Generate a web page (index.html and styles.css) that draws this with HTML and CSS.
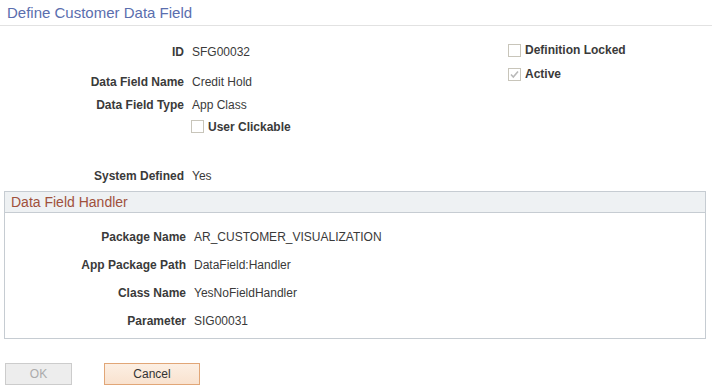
FILE: index.html
```html
<!DOCTYPE html>
<html lang="en">
<head>
  <meta charset="UTF-8" />
  <title>Define Customer Data Field</title>
  <link rel="stylesheet" href="styles.css">
</head>
<body>

<header class="page-title">Define Customer Data Field</header>

<div class="top">
  <div class="fields">
    <div class="row row-id">
      <span class="label">ID</span>
      <span class="value">SFG00032</span>
    </div>
    <div class="row">
      <span class="label">Data Field Name</span>
      <span class="value">Credit Hold</span>
    </div>
    <div class="row">
      <span class="label">Data Field Type</span>
      <span class="value">App Class</span>
    </div>
    <div class="row row-check">
      <span class="label"></span>
      <span class="check"><span class="box"></span>User Clickable</span>
    </div>
    <div class="row row-system">
      <span class="label">System Defined</span>
      <span class="value">Yes</span>
    </div>
  </div>

  <div class="flags">
    <div class="flag"><span class="box"></span>Definition Locked</div>
    <div class="flag">
      <span class="box checked">
        <svg width="11" height="11" viewBox="0 0 11 11"><path d="M2 5.5 L4.3 8 L9 2.5" fill="none" stroke="#b9b9b9" stroke-width="1.6"/></svg>
      </span>Active
    </div>
  </div>
</div>

<section class="group">
  <div class="group-head">Data Field Handler</div>
  <div class="group-body">
    <div class="grow">
      <span class="label">Package Name</span>
      <span class="value">AR_CUSTOMER_VISUALIZATION</span>
    </div>
    <div class="grow">
      <span class="label">App Package Path</span>
      <span class="value">DataField:Handler</span>
    </div>
    <div class="grow">
      <span class="label">Class Name</span>
      <span class="value">YesNoFieldHandler</span>
    </div>
    <div class="grow">
      <span class="label">Parameter</span>
      <span class="value">SIG00031</span>
    </div>
  </div>
</section>

<div class="actions">
  <button class="btn btn-ok" disabled>OK</button>
  <button class="btn btn-cancel">Cancel</button>
</div>

</body>
</html>
```

FILE: styles.css
```css
* {
  box-sizing: border-box;
  margin: 0;
  padding: 0;
}

body {
  font-family: "Liberation Sans", Arial, sans-serif;
  font-size: 12px;
  color: #333333;
  background: #ffffff;
  width: 712px;
  height: 390px;
  overflow: hidden;
}

.page-title {
  height: 26px;
  padding: 3px 7px 0;
  font-size: 15px;
  line-height: 19px;
  color: #5a6eae;
  border-bottom: 1px solid #e2e2e2;
}

.top {
  display: flex;
}

.fields {
  width: 508px;
  padding-top: 14px;
}

.row {
  display: flex;
  align-items: center;
  height: 23px;
}

.row-id {
  margin-bottom: 7px;
}

.row-check {
  height: 21px;
}

.row-system {
  margin-top: 27px;
}

.label {
  width: 184px;
  text-align: right;
  font-weight: bold;
  color: #3a3a3a;
  flex-shrink: 0;
}

.value {
  margin-left: 8px;
  color: #3a3a3a;
}

.check {
  display: flex;
  align-items: center;
  margin-left: 7px;
  font-weight: bold;
  color: #3a3a3a;
}

.box {
  display: inline-flex;
  align-items: center;
  justify-content: center;
  width: 13px;
  height: 13px;
  border: 1px solid #c8c5ba;
  background: #ffffff;
  margin-right: 4px;
}

.flags {
  padding-top: 12px;
}

.flag {
  display: flex;
  align-items: center;
  height: 24px;
  font-weight: bold;
  color: #3a3a3a;
}

.group {
  margin: 4px 6px 0 4px;
  border: 1px solid #c6ccd2;
}

.group-head {
  height: 21px;
  padding-left: 6px;
  line-height: 20px;
  font-size: 14px;
  color: #a0503c;
  background: #eef1f3;
  border-bottom: 1px solid #c6ccd2;
}

.group-body {
  padding: 10px 0 3px;
}

.grow {
  display: flex;
  align-items: center;
  height: 28px;
}

.grow .label {
  width: 181px;
}

.actions {
  display: flex;
  gap: 32px;
  margin: 24px 0 0 5px;
}

.btn {
  height: 22px;
  font-family: "Liberation Sans", Arial, sans-serif;
  font-size: 12px;
  border: 1px solid #cccccc;
}

.btn-ok {
  width: 67px;
  color: #ababab;
  background: #ededed;
}

.btn-cancel {
  width: 96px;
  color: #333333;
  background: linear-gradient(#fcefe3, #f9e2cf);
  border-color: #e1a677;
  cursor: pointer;
}
```
